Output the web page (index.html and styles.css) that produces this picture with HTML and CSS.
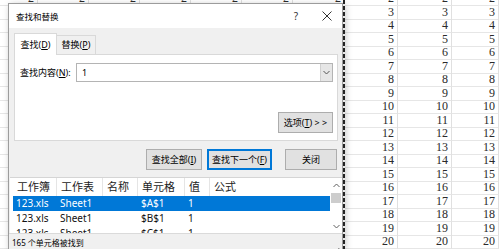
FILE: index.html
```html
<!DOCTYPE html>
<html lang="zh-CN">
<head>
    <meta charset="UTF-8">
    <title>查找和替换</title>
    <link rel="stylesheet" href="styles.css">
</head>
<body>
    <!-- 背景工作表（被对话框挡住的单元格留空） -->
    <div class="sheet">
        <div class="row"><span>2</span><span>2</span><span>2</span><span>2</span><span>2</span><span>2</span><span>2</span><span>2</span><span>2</span><span>2</span></div>
        <div class="row"><span></span><span></span><span></span><span></span><span></span><span></span><span></span><span>3</span><span>3</span><span>3</span></div>
        <div class="row"><span></span><span></span><span></span><span></span><span></span><span></span><span></span><span>4</span><span>4</span><span>4</span></div>
        <div class="row"><span></span><span></span><span></span><span></span><span></span><span></span><span></span><span>5</span><span>5</span><span>5</span></div>
        <div class="row"><span></span><span></span><span></span><span></span><span></span><span></span><span></span><span>6</span><span>6</span><span>6</span></div>
        <div class="row"><span></span><span></span><span></span><span></span><span></span><span></span><span></span><span>7</span><span>7</span><span>7</span></div>
        <div class="row"><span></span><span></span><span></span><span></span><span></span><span></span><span></span><span>8</span><span>8</span><span>8</span></div>
        <div class="row"><span></span><span></span><span></span><span></span><span></span><span></span><span></span><span>9</span><span>9</span><span>9</span></div>
        <div class="row"><span></span><span></span><span></span><span></span><span></span><span></span><span></span><span>10</span><span>10</span><span>10</span></div>
        <div class="row"><span></span><span></span><span></span><span></span><span></span><span></span><span></span><span>11</span><span>11</span><span>11</span></div>
        <div class="row"><span></span><span></span><span></span><span></span><span></span><span></span><span></span><span>12</span><span>12</span><span>12</span></div>
        <div class="row"><span></span><span></span><span></span><span></span><span></span><span></span><span></span><span>13</span><span>13</span><span>13</span></div>
        <div class="row"><span></span><span></span><span></span><span></span><span></span><span></span><span></span><span>14</span><span>14</span><span>14</span></div>
        <div class="row"><span></span><span></span><span></span><span></span><span></span><span></span><span></span><span>15</span><span>15</span><span>15</span></div>
        <div class="row"><span></span><span></span><span></span><span></span><span></span><span></span><span></span><span>16</span><span>16</span><span>16</span></div>
        <div class="row"><span></span><span></span><span></span><span></span><span></span><span></span><span></span><span>17</span><span>17</span><span>17</span></div>
        <div class="row"><span></span><span></span><span></span><span></span><span></span><span></span><span></span><span>18</span><span>18</span><span>18</span></div>
        <div class="row"><span></span><span></span><span></span><span></span><span></span><span></span><span></span><span>19</span><span>19</span><span>19</span></div>
        <div class="row"><span></span><span></span><span></span><span></span><span></span><span></span><span></span><span>20</span><span>20</span><span>20</span></div>
    </div>

    <!-- 选区虚线 -->
    <div class="marquee"></div>

    <div class="dialog">
        <div class="titlebar">
            <span class="title">查找和替换</span>
            <span class="tb-btn help">?</span>
            <span class="tb-btn close">
                <svg width="10" height="10" viewBox="0 0 10 10"><path d="M0.5 0.5L9.5 9.5M9.5 0.5L0.5 9.5" stroke="#333" stroke-width="1" fill="none"/></svg>
            </span>
        </div>

        <div class="tabs">
            <div class="tab active">查找(<u>D</u>)</div>
            <div class="tab">替换(<u>P</u>)</div>
        </div>

        <div class="panel">
            <div class="field">
                <label>查找内容(<u>N</u>):</label>
                <div class="combo">
                    <span class="combo-text">1</span>
                    <span class="combo-arrow">
                        <svg width="7" height="5" viewBox="0 0 7 5"><path d="M0.5 1L3.5 4L6.5 1" stroke="#555" stroke-width="1" fill="none"/></svg>
                    </span>
                </div>
            </div>
            <div class="opt-row">
                <button class="btn opt">选项(<u>T</u>) &gt; &gt;</button>
            </div>
        </div>

        <div class="actions">
            <button class="btn find-all">查找全部(<u>I</u>)</button>
            <button class="btn find-next">查找下一个(<u>F</u>)</button>
            <button class="btn close-btn">关闭</button>
        </div>

        <div class="results">
            <div class="results-body">
                <div class="res-head">
                    <span>工作簿</span><span>工作表</span><span>名称</span><span>单元格</span><span>值</span><span>公式</span>
                </div>
                <div class="res-row selected">
                    <span>123.xls</span><span>Sheet1</span><span></span><span>$A$1</span><span>1</span><span></span>
                </div>
                <div class="res-row">
                    <span>123.xls</span><span>Sheet1</span><span></span><span>$B$1</span><span>1</span><span></span>
                </div>
                <div class="res-row">
                    <span>123.xls</span><span>Sheet1</span><span></span><span>$C$1</span><span>1</span><span></span>
                </div>
            </div>
            <div class="scrollbar">
                <span class="sb-arrow">
                    <svg width="7" height="5" viewBox="0 0 7 5"><path d="M0.5 4L3.5 1L6.5 4" stroke="#606060" stroke-width="1" fill="none"/></svg>
                </span>
                <span class="sb-thumb"></span>
                <span class="sb-space"></span>
                <span class="sb-arrow">
                    <svg width="7" height="5" viewBox="0 0 7 5"><path d="M0.5 1L3.5 4L6.5 1" stroke="#606060" stroke-width="1" fill="none"/></svg>
                </span>
            </div>
        </div>

        <div class="status">
            <span>165 个单元格被找到</span>
            <span class="grip">
                <svg width="6" height="6" viewBox="0 0 6 6"><rect x="4" y="0" width="1.5" height="1.5" fill="#999"/><rect x="2" y="2" width="1.5" height="1.5" fill="#999"/><rect x="4" y="2" width="1.5" height="1.5" fill="#999"/><rect x="0" y="4" width="1.5" height="1.5" fill="#999"/><rect x="2" y="4" width="1.5" height="1.5" fill="#999"/><rect x="4" y="4" width="1.5" height="1.5" fill="#999"/></svg>
            </span>
        </div>
    </div>
</body>
</html>
```

FILE: styles.css
```css
* {
    box-sizing: border-box;
}
body {
    margin: 0;
    width: 499px;
    height: 249px;
    overflow: hidden;
    position: relative;
    background: #fff;
}

/* 工作表 */
.sheet {
    margin-top: -8px;
}
.row {
    display: grid;
    grid-template-columns: 38px 51px 51px 51px 51px 51px 52px 53px 54px 47px;
    height: 13.5px;
}
.row span {
    border-right: 1px solid #e0e0e0;
    border-bottom: 1px solid #e6e6e6;
    text-align: right;
    padding-right: 3px;
    font: 12px/13px "Liberation Serif", serif;
    color: #2a2a2a;
}
.marquee {
    position: absolute;
    left: 343px;
    top: 0;
    width: 2px;
    height: 249px;
    background: repeating-linear-gradient(to bottom, #222 0 4px, #e8e8e8 4px 6px);
    z-index: 2;
}

/* 对话框 */
.dialog {
    position: absolute;
    left: 8px;
    top: 3px;
    width: 335px;
    height: 246px;
    background: #f0f0f0;
    border: 1px solid #9c9c9c;
    border-bottom: none;
    box-shadow: 2px 2px 7px rgba(0,0,0,0.28);
    font-family: "Noto Sans", "Noto Sans CJK SC", sans-serif;
    font-size: 9px;
    color: #000;
    display: flex;
    flex-direction: column;
}
.titlebar {
    height: 24px;
    background: #fff;
    display: flex;
    align-items: center;
    padding-left: 7px;
    flex: none;
}
.title {
    font-size: 8.5px;
}
.tb-btn {
    display: flex;
    align-items: center;
    justify-content: center;
    height: 24px;
}
.help {
    margin-left: auto;
    width: 32px;
    font-size: 10px;
    color: #333;
}
.close {
    width: 30px;
}

.tabs {
    display: flex;
    align-items: flex-end;
    margin: 5px 0 -1px 5px;
    position: relative;
    z-index: 1;
    flex: none;
}
.tab {
    height: 19px;
    width: 39px;
    text-align: center;
    line-height: 18px;
    border: 1px solid #d9d9d9;
    border-left: none;
    border-bottom: none;
    background: #f0f0f0;
    margin-bottom: 1px;
}
.tab.active {
    width: 43px;
    height: 22px;
    line-height: 21px;
    background: #fff;
    border-left: 1px solid #d9d9d9;
    margin-bottom: 0;
}

.panel {
    height: 87px;
    margin: 0 4px 0 5px;
    background: #fff;
    border: 1px solid #d9d9d9;
    padding: 8px 4px 7px 5px;
    display: flex;
    flex-direction: column;
    flex: none;
}
.field {
    display: flex;
    align-items: center;
}
.field label {
    width: 56px;
}
.combo {
    flex: 1;
    height: 19px;
    border: 1px solid #b4b4b4;
    display: flex;
    align-items: center;
}
.combo-text {
    flex: 1;
    padding-left: 5px;
}
.combo-arrow {
    width: 12px;
    height: 17px;
    background: #e6e6e6;
    border-left: 1px solid #d0d0d0;
    display: flex;
    align-items: center;
    justify-content: center;
}
.opt-row {
    margin-top: auto;
    display: flex;
    justify-content: flex-end;
}

.btn {
    height: 21px;
    padding: 0;
    background: #e1e1e1;
    border: 1px solid #adadad;
    font-family: inherit;
    font-size: 9px;
    color: #000;
}
.opt {
    width: 55px;
}
.actions {
    display: flex;
    justify-content: flex-end;
    margin-top: 8px;
    padding-right: 5px;
    flex: none;
}
.find-all {
    width: 56px;
}
.find-next {
    width: 65px;
    margin-left: 5px;
    border: 2px solid #0078d7;
}
.close-btn {
    width: 52px;
    margin-left: 13px;
}

/* 结果列表 */
.results {
    margin-top: 7px;
    margin-left: 1px;
    height: 56px;
    background: #fff;
    border-top: 1px solid #d5d5d5;
    display: flex;
    overflow: hidden;
    flex: none;
}
.results-body {
    flex: 1;
    padding-left: 3px;
}
.res-head, .res-row {
    display: grid;
    grid-template-columns: 44px 46px 35px 47px 25px 1fr;
}
.res-head {
    height: 18px;
    font-size: 11px;
    line-height: 18px;
    color: #222;
}
.res-head span {
    border-right: 1px solid #e5e5e5;
    padding-left: 4px;
}
.res-head span:last-child {
    border-right: none;
}
.res-row {
    height: 15px;
    font-size: 10px;
    line-height: 15px;
    color: #111;
}
.res-row span {
    padding-left: 3px;
}
.res-row.selected {
    background: #0078d7;
    color: #fff;
}
.scrollbar {
    width: 12px;
    display: flex;
    flex-direction: column;
    background: #fff;
}
.sb-arrow {
    height: 14px;
    display: flex;
    align-items: center;
    justify-content: center;
}
.sb-thumb {
    height: 10px;
    margin: 1px 1px 0;
    background: #cdcdcd;
}
.sb-space {
    flex: 1;
}

.status {
    flex: 1;
    border-top: 1px solid #dadada;
    padding-left: 3px;
    font-size: 8px;
    line-height: 17px;
    display: flex;
}
.grip {
    margin-left: auto;
    padding: 8px 2px 0 0;
}
```
